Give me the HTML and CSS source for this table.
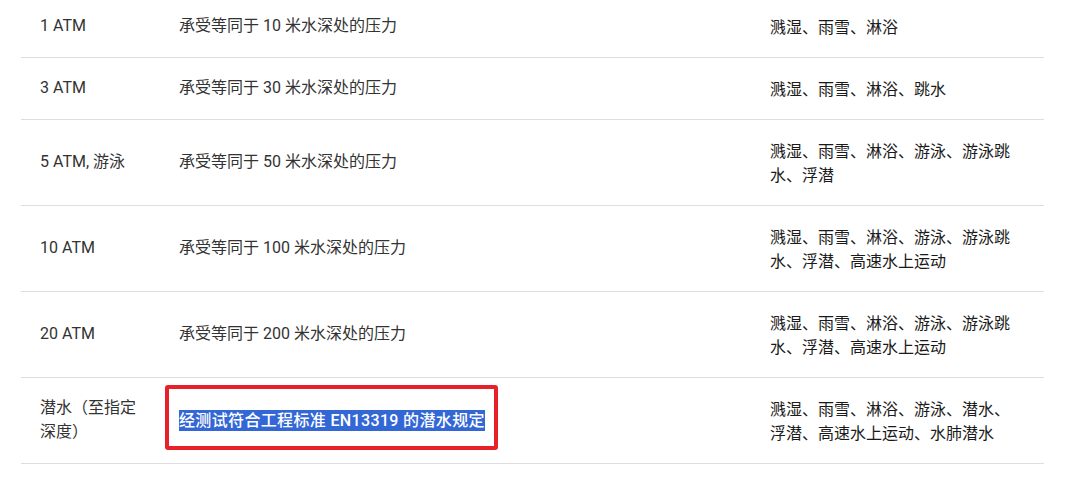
FILE: index.html
```html
<!DOCTYPE html>
<html lang="zh-CN">
<head>
    <meta charset="UTF-8">
    <meta name="viewport" content="width=device-width, initial-scale=1.0">
    <title>防水等级</title>
    <link rel="stylesheet" href="styles.css">
</head>
<body>
    <table class="rating-table">
        <colgroup>
            <col class="col-level">
            <col class="col-desc">
            <col class="col-use">
        </colgroup>
        <tbody>
            <tr>
                <td>1 ATM</td>
                <td>承受等同于 10 米水深处的压力</td>
                <td class="use">溅湿、雨雪、淋浴</td>
            </tr>
            <tr>
                <td>3 ATM</td>
                <td>承受等同于 30 米水深处的压力</td>
                <td class="use">溅湿、雨雪、淋浴、跳水</td>
            </tr>
            <tr>
                <td>5 ATM, 游泳</td>
                <td>承受等同于 50 米水深处的压力</td>
                <td class="use">溅湿、雨雪、淋浴、游泳、游泳跳水、浮潜</td>
            </tr>
            <tr>
                <td>10 ATM</td>
                <td>承受等同于 100 米水深处的压力</td>
                <td class="use">溅湿、雨雪、淋浴、游泳、游泳跳水、浮潜、高速水上运动</td>
            </tr>
            <tr>
                <td>20 ATM</td>
                <td>承受等同于 200 米水深处的压力</td>
                <td class="use">溅湿、雨雪、淋浴、游泳、游泳跳水、浮潜、高速水上运动</td>
            </tr>
            <tr>
                <td>潜水（至指定深度）</td>
                <td class="marked">
                    <span class="selected">经测试符合工程标准 EN13319 的潜水规定</span>
                    <!-- red annotation frame drawn over the cell -->
                    <span class="mark-box"></span>
                </td>
                <td class="use">溅湿、雨雪、淋浴、游泳、潜水、浮潜、高速水上运动、水肺潜水</td>
            </tr>
        </tbody>
    </table>
</body>
</html>
```

FILE: styles.css
```css
body {
    margin: 0;
    background-color: #ffffff;
    font-family: Roboto, "Noto Sans CJK SC", sans-serif;
    font-size: 16px;
    color: #333333;
}

.rating-table {
    table-layout: fixed;
    border-collapse: collapse;
    width: 1023px;
    margin: -4px 0 0 21px; /* first row is cut off at the top */
}

.col-level {
    width: 139px;
}

.col-desc {
    width: 591px;
}

.col-use {
    width: 293px;
}

.rating-table td {
    padding: 18px 19px 19px 19px;
    line-height: 24px;
    vertical-align: middle;
    border-bottom: 1px solid #dddddd;
}

.rating-table td.use {
    padding-right: 25px;
    color: #1a1a1a;
    font-family: "Noto Sans CJK SC", sans-serif;
}

.marked {
    position: relative;
}

.selected {
    background-color: #3367d6;
    color: #ffffff;
    font-weight: 500;
    letter-spacing: 0.35px;
    line-height: 25px;
    padding: 1px 0;
}

.mark-box {
    position: absolute;
    left: 5px;
    top: 7px;
    width: 333px;
    height: 65px;
    box-sizing: border-box;
    border: 4px solid #e8202c;
    border-radius: 3px;
}
```
